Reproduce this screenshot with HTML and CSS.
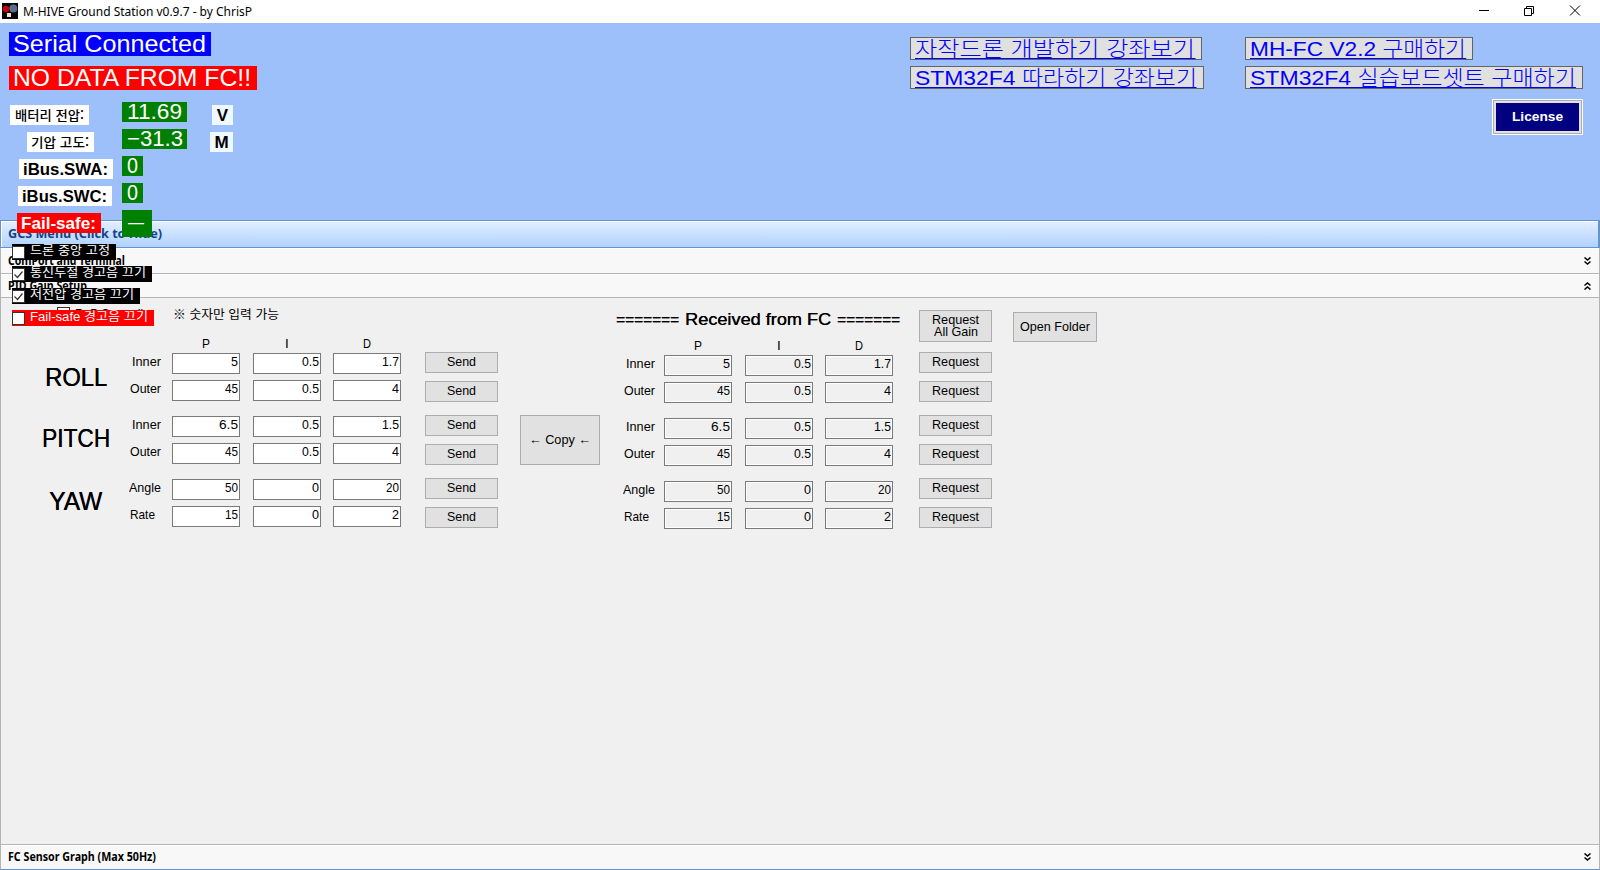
FILE: index.html
```html
<!DOCTYPE html>
<html lang="ko">
<head>
<meta charset="utf-8">
<title>M-HIVE Ground Station v0.9.7 - by ChrisP</title>
<link rel="stylesheet" href="styles.css">
</head>
<body>
<div class="window">
  <header class="titlebar">
    <svg class="app-icon" width="16" height="16" viewBox="0 0 16 16"><path fill="#050508" d="M0 0h16v16H0z"/><circle cx="4" cy="6" r="3.200" fill="#c8000c"/><circle cx="11.300" cy="5.500" r="4" fill="#5b6d8b"/><path fill="#f3e2c4" d="M5 10h4v4H5z"/></svg>
    <span class="title" data-w="229">M-HIVE Ground Station v0.9.7 - by ChrisP</span>
    <svg class="controls" width="102" height="11" viewBox="0 0 102 11" fill="none" stroke="#000"><path d="M0 5.500h10M45.500 3.500h7v7h-7zM47.500 3.500v-2h7v7h-2M91 .500l10 10M101 .500l-10 10"/></svg>
  </header>

  <section class="dash">
    <div class="links">
      <div class="link-col">
        <a class="link"><span data-w="280">자작드론 개발하기 강좌보기</span></a>
        <a class="link"><span data-w="282">STM32F4 따라하기 강좌보기</span></a>
      </div>
      <div class="link-col">
        <a class="link"><span data-w="216">MH-FC V2.2 구매하기</span></a>
        <a class="link"><span data-w="326">STM32F4 실습보드셋트 구매하기</span></a>
        <button class="license"><span data-w="51">License</span></button>
      </div>
    </div>
  </section>

  <section class="menu">
    <div class="menu-head"><span data-w="154">GCS Menu (Click to Hide)</span></div>
    <div class="bar bar-port"><span data-w="117">ComPort and Terminal</span><svg class="chev" width="7" height="8" viewBox="0 0 7 8"><path d="M.500.500l3 2.500 3-2.500M.500 4.500l3 2.500 3-2.500"/></svg></div>
    <div class="bar bar-pid"><span data-w="79">PID Gain Setup</span><svg class="chev" width="7" height="8" viewBox="0 0 7 8"><path d="M.500 3.500l3-2.500 3 2.500M.500 7.500l3-2.500 3 2.500"/></svg></div>

    <div class="pid">
      <div class="copyall"><i class="box"></i><span data-w="68">R=P Copy all</span></div>
      <div class="hint"><span data-w="106">※ 숫자만 입력 가능</span></div>
      <div class="names">
        <div><span data-w="62">ROLL</span></div>
        <div><span data-w="68">PITCH</span></div>
        <div><span data-w="53">YAW</span></div>
      </div>
      <div class="gains">
        <div class="row head"><b></b><b><span data-w="8">P</span></b><b><span>I</span></b><b><span data-w="8">D</span></b></div>
        <div class="row"><label><span data-w="29">Inner</span></label><p><span data-w="7">5</span></p><p><span data-w="17">0.5</span></p><p><span data-w="17">1.7</span></p></div>
        <div class="row"><label><span data-w="31">Outer</span></label><p><span data-w="13">45</span></p><p><span data-w="17">0.5</span></p><p><span data-w="7">4</span></p></div>
        <div class="row first"><label><span data-w="29">Inner</span></label><p><span data-w="19">6.5</span></p><p><span data-w="17">0.5</span></p><p><span data-w="17">1.5</span></p></div>
        <div class="row"><label><span data-w="31">Outer</span></label><p><span data-w="13">45</span></p><p><span data-w="17">0.5</span></p><p><span data-w="7">4</span></p></div>
        <div class="row first"><label><span data-w="32">Angle</span></label><p><span data-w="13">50</span></p><p><span data-w="7">0</span></p><p><span data-w="13">20</span></p></div>
        <div class="row"><label class="rate"><span data-w="25">Rate</span></label><p><span data-w="13">15</span></p><p><span data-w="7">0</span></p><p><span data-w="7">2</span></p></div>
      </div>
      <div class="buttons send">
        <button><span data-w="29">Send</span></button><button><span data-w="29">Send</span></button>
        <button><span data-w="29">Send</span></button><button><span data-w="29">Send</span></button>
        <button><span data-w="29">Send</span></button><button><span data-w="29">Send</span></button>
      </div>
      <button class="copy"><span data-w="62">← Copy ←</span></button>
      <div class="received">
        <h2><span class="eq" data-w="63">=======</span><span data-w="146">Received from FC</span><span class="eq" data-w="63">=======</span></h2>
        <div class="gains readonly">
          <div class="row head"><b></b><b><span data-w="8">P</span></b><b><span>I</span></b><b><span data-w="8">D</span></b></div>
          <div class="row"><label><span data-w="29">Inner</span></label><p><span data-w="7">5</span></p><p><span data-w="17">0.5</span></p><p><span data-w="17">1.7</span></p></div>
          <div class="row"><label><span data-w="31">Outer</span></label><p><span data-w="13">45</span></p><p><span data-w="17">0.5</span></p><p><span data-w="7">4</span></p></div>
          <div class="row first"><label><span data-w="29">Inner</span></label><p><span data-w="19">6.5</span></p><p><span data-w="17">0.5</span></p><p><span data-w="17">1.5</span></p></div>
          <div class="row"><label><span data-w="31">Outer</span></label><p><span data-w="13">45</span></p><p><span data-w="17">0.5</span></p><p><span data-w="7">4</span></p></div>
          <div class="row first"><label><span data-w="32">Angle</span></label><p><span data-w="13">50</span></p><p><span data-w="7">0</span></p><p><span data-w="13">20</span></p></div>
          <div class="row"><label class="rate"><span data-w="25">Rate</span></label><p><span data-w="13">15</span></p><p><span data-w="7">0</span></p><p><span data-w="7">2</span></p></div>
        </div>
      </div>
      <div class="buttons request">
        <button class="all"><span data-w="47">Request</span><span data-w="44">All Gain</span></button>
        <button><span data-w="47">Request</span></button><button><span data-w="47">Request</span></button>
        <button><span data-w="47">Request</span></button><button><span data-w="47">Request</span></button>
        <button><span data-w="47">Request</span></button><button><span data-w="47">Request</span></button>
      </div>
      <button class="folder"><span data-w="70">Open Folder</span></button>
    </div>

    <div class="bar bar-last"><span data-w="148">FC Sensor Graph (Max 50Hz)</span><svg class="chev" width="7" height="8" viewBox="0 0 7 8"><path d="M.500.500l3 2.500 3-2.500M.500 4.500l3 2.500 3-2.500"/></svg></div>
  </section>

  <aside class="status">
    <div class="banner serial"><span data-w="193">Serial Connected</span></div>
    <div class="banner nodata"><span data-w="238">NO DATA FROM FC!!</span></div>
    <div class="read r1"><div class="tag ko"><span data-w="69">배터리 전압:</span></div><div class="val"><span data-w="55">11.69</span></div><div class="unit"><span>V</span></div></div>
    <div class="read r2"><div class="tag ko"><span data-w="58">기압 고도:</span></div><div class="val"><span data-w="56">−31.3</span></div><div class="unit m"><span>M</span></div></div>
    <div class="read r3"><div class="tag"><span data-w="85">iBus.SWA:</span></div><div class="val one"><span data-w="11">0</span></div></div>
    <div class="read r4"><div class="tag"><span data-w="85">iBus.SWC:</span></div><div class="val one"><span data-w="11">0</span></div></div>
    <div class="read r5"><div class="tag alarm"><span data-w="75">Fail-safe:</span></div><div class="val dash-val"><span data-w="16">—</span></div></div>
    <div class="checks">
      <div class="check"><i class="box"></i><span data-w="80">드론 중앙 고정</span></div>
      <div class="check"><svg class="box" viewBox="0 0 11 11"><path d="M1.500 5.500l3 3 5-6"/></svg><span data-w="116">통신두절 경고음 끄기</span></div>
      <div class="check"><svg class="box" viewBox="0 0 11 11"><path d="M1.500 5.500l3 3 5-6"/></svg><span data-w="104">저전압 경고음 끄기</span></div>
      <div class="check red"><i class="box"></i><span data-w="118">Fail-safe 경고음 끄기</span></div>
    </div>
  </aside>
</div>
<script src="fit.js"></script>
</body>
</html>
```
FILE: styles.css
```css
* { box-sizing: border-box; }
body { margin: 0; font-family: "Liberation Sans", "Noto Sans CJK KR", sans-serif; font-size: 14px; color: #000; }
span { white-space: pre; display: inline-block; flex: none; }
p, h2 { margin: 0; font-weight: normal; }
button { font: inherit; padding: 0; border-radius: 0; color: #000; }
.window { position: relative; width: 1600px; height: 870px; display: flex; flex-direction: column; background: #9dbffa; overflow: hidden; }

.titlebar { height: 23px; background: #fff; display: flex; align-items: center; padding: 0 19px 0 2px; flex: none; }
.app-icon { margin-top: -1px; }
.title { font: 12.5px/22px "Noto Sans", sans-serif; margin-left: 5px; }
.controls { margin: -3px 0 0 auto; }

.dash { height: 197px; flex: none; padding: 14px 17px 0 910px; }
.links { display: flex; justify-content: space-between; }
.link-col { display: flex; flex-direction: column; align-items: flex-start; gap: 6px; }
.link-col:last-child { width: 338px; }
.link { height: 23px; border: 1px solid #646464; background: #e0e0e0; padding: 0 6px 0 4px; color: #00f; font: 300 21px/22px "Liberation Sans", "Noto Sans CJK KR", sans-serif; }
.link span { border-bottom: 1px solid #00f; height: 21px; }
.license { align-self: flex-end; margin-top: 4px; width: 91px; height: 36px; background: #000080; color: #fff; border: 1px solid #fff; box-shadow: inset 0 0 0 1px #adadad, inset 0 0 0 3px #e1e1e1; font: bold 13px/34px "Liberation Sans", sans-serif; }

.menu { flex: 1; display: flex; flex-direction: column; background: #f0f0f0; font-family: "Noto Sans", sans-serif; }
.menu-head { height: 28px; flex: none; border: 1px solid #6593cf; border-right-width: 2px; box-shadow: inset 1px 1px #fff; background: linear-gradient(#e3efff, #afd2ff); font-weight: bold; font-size: 13px; line-height: 24px; color: #15428b; padding-left: 7px; }
.bar { height: 26px; flex: none; display: flex; justify-content: space-between; align-items: center; background: #f8f8f8; border: solid #b4b4b4; border-width: 0 1px 1px; box-shadow: inset 0 1px #fff; font-weight: bold; font-size: 11.5px; line-height: 22px; padding: 0 8px 0 7px; }
.bar-port { padding-top: 1px; }
.bar-pid { height: 24px; }
.bar-last { height: 26px; border-top-width: 1px; border-bottom-color: #6593cf; }
.chev { fill: none; stroke: #000; stroke-width: 1.5; }

.pid { position: relative; flex: 1; display: flex; align-items: flex-start; border: solid #b4b4b4; border-width: 0 1px; font-family: "Liberation Sans", "Noto Sans CJK KR", sans-serif; font-size: 13.5px; }
.copyall, .hint { position: absolute; top: 9px; display: flex; align-items: center; gap: 5px; height: 15px; }
.copyall { left: 56px; top: 8px; line-height: 14px; }
.hint { left: 172px; top: 8px; font: 400 12.5px/15px "Noto Sans CJK KR", sans-serif; }
.names { width: 77px; margin-left: 36px; margin-right: 1px; padding-top: 64px; font-size: 25px; line-height: 30px; display: flex; flex-direction: column; gap: 32px; align-items: center; text-shadow: .4px 0 #000; }
.names div:nth-child(2) { margin: -1px 0 1px; }
.gains { width: 286px; padding-top: 33px; }
.row { display: grid; grid-template-columns: 57px 68px 13px 68px 12px 68px; height: 21px; margin-bottom: 6px; }
.row > :nth-child(1) { grid-column: 1; }
.row > :nth-child(2) { grid-column: 2; }
.row > :nth-child(3) { grid-column: 4; }
.row > :nth-child(4) { grid-column: 6; }
.row.first { margin-top: 15px; }
.row label { text-align: right; line-height: 17px; padding-right: 11px; }
.row label.rate { padding-right: 17px; }
.row p { border: 1px solid #7a7a7a; background: #fff; text-align: right; line-height: 16px; padding-right: 1px; }
.readonly p { background: #f0f0f0; box-shadow: inset 0 0 0 1px #fff; }
.row b { font-weight: normal; text-align: center; line-height: 15px; padding-top: 5px; }
.row.head { height: 16px; }
.buttons { width: 73px; margin: 54px 0 0 24px; display: flex; flex-direction: column; gap: 8px; }
.buttons button, .copy, .folder { height: 21px; border: 1px solid #adadad; background: #e1e1e1; line-height: 17px; display: flex; justify-content: center; flex: none; }
.send button:nth-child(odd):not(:first-child), .request button:nth-child(even):not(:nth-child(2)) { margin-top: 5px; }
.copy { width: 80px; height: 50px; margin: 117px 0 0 22px; line-height: 47px; }
.received { width: 293px; margin-left: 16px; padding-top: 11px; }
.received h2 { display: flex; gap: 6px; font-size: 17px; line-height: 22px; text-shadow: .3px 0 #000; height: 22px; }
.received .gains { padding-top: 2px; margin-left: -9px; }
.readonly label { padding-right: 9px; }
.readonly label.rate { padding-right: 15px; }
.request { margin: 12px 0 0 10px; }
.request .all { height: 32px; margin-bottom: 2px; display: flex; flex-direction: column; align-items: center; justify-content: center; line-height: 12px; }
.folder { width: 84px; height: 30px; margin: 14px 0 0 21px; line-height: 27px; }

.status { position: absolute; left: 0; top: 32px; display: flex; flex-direction: column; align-items: flex-start; }
.banner { height: 24px; margin: 0 0 10px 9px; color: #fff; font-size: 24px; line-height: 24px; padding: 0 5px 0 4px; }
.serial { background: #00f; }
.nodata { background: #f00; padding-right: 6px; margin-bottom: 12px; }
.read { display: flex; height: 20px; margin-bottom: 7px; width: 233px; }
.tag { margin-top: 3px; height: 20px; background: #fff; font-weight: bold; font-size: 17px; line-height: 21px; padding: 0 4px; flex: none; }
.tag.ko { font: 500 13px/20px "Noto Sans CJK KR", sans-serif; padding: 0 5px; }
.r1 .tag { margin-left: 10px; width: 79px; }
.r2 .tag { margin-left: 27px; width: 67px; }
.r2 .tag.ko { padding: 0 4px; }
.r3 .tag { margin-left: 19px; width: 94px; }
.r4 .tag { margin-left: 18px; width: 94px; }
.r5 .tag { margin-left: 17px; width: 84px; }
.tag.alarm { background: #f00; color: #fff; }
.val { background: #008000; color: #fff; height: 20px; width: 65px; font-size: 22px; line-height: 19px; text-align: center; flex: none; }
.r1 .val { margin-left: 33px; } .r2 .val { margin-left: 28px; } .r3 .val { margin-left: 9px; } .r4 .val { margin-left: 10px; } .r5 .val { margin-left: 21px; }
.val.one { width: 21px; }
.val.dash-val { width: 30px; height: 27px; line-height: 26px; font-size: 16px; padding-right: 2px; }
.unit { width: 21px; height: 20px; margin: 3px 0 0 auto; background: #f0f8ff; font-size: 17px; font-weight: bold; line-height: 21px; text-align: center; }
.unit.m { width: 23px; }
.checks { display: flex; flex-direction: column; align-items: flex-start; gap: 6px; margin: 7px 0 0 12px; }
.check { height: 16px; background: #000; color: #fff; display: flex; align-items: center; gap: 5px; padding-right: 6px; font: 400 12.5px/14px "Liberation Sans", "Noto Sans CJK KR", sans-serif; }
.check span { margin-top: -2px; }
.check.red { background: #f00; }
.box { width: 13px; height: 13px; flex: none; border: 1px solid #333; background: #fff; fill: none; stroke: #333; stroke-width: 1.2; }
```
FILE: fit.js
```javascript
// Scales each label horizontally to its data-w width in pixels.
document.querySelectorAll('[data-w]').forEach(function (el) {
  var natural = el.getBoundingClientRect().width;
  var target = Number(el.dataset.w);
  el.style.transformOrigin = '0 50%';
  el.style.transform = 'scaleX(' + target / natural + ')';
  el.style.marginRight = (target - natural) + 'px';
});
```
